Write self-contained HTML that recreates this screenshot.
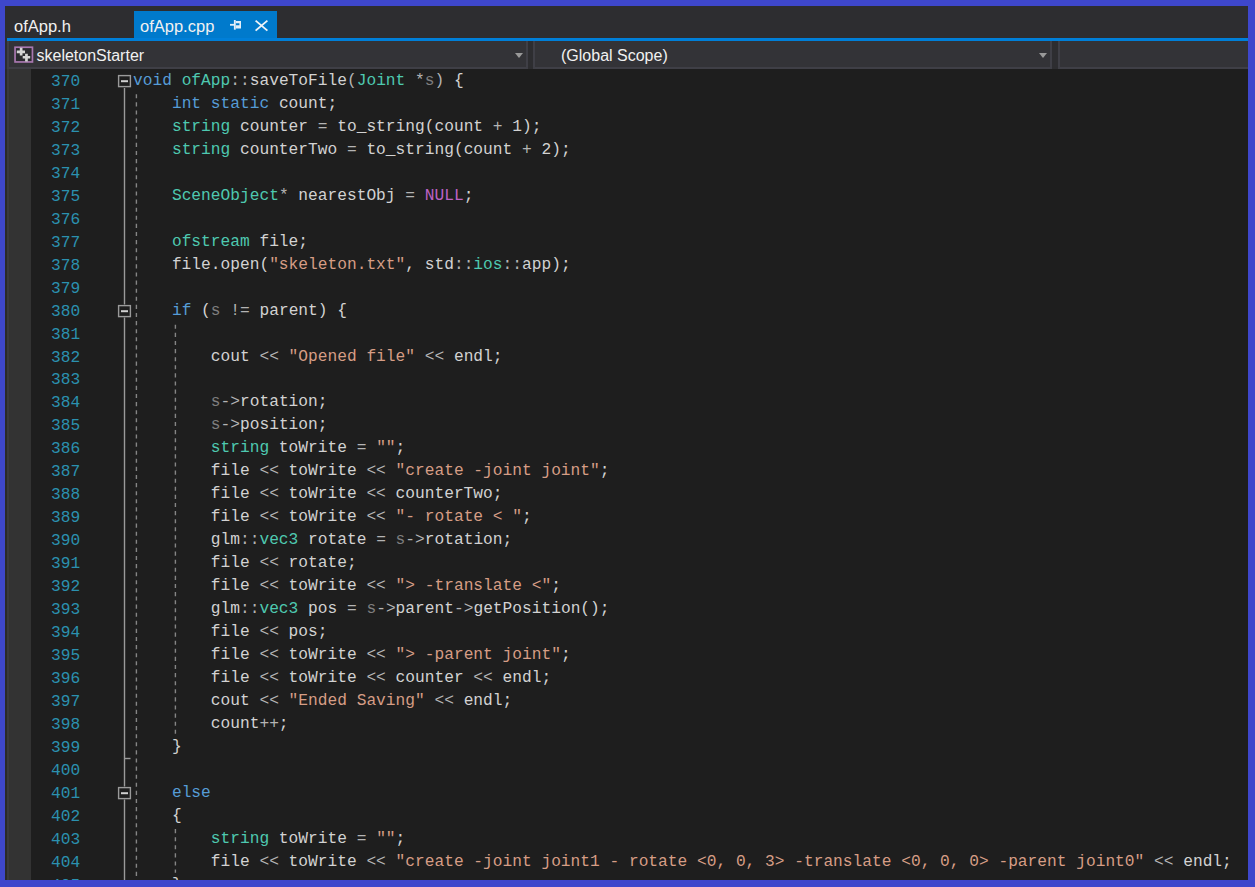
<!DOCTYPE html>
<html><head><meta charset="utf-8">
<style>
html,body{margin:0;padding:0;}
body{width:1255px;height:887px;background:#3E47CC;position:relative;overflow:hidden;font-family:"Liberation Sans",sans-serif;}
#win{position:absolute;left:5px;top:6px;width:1243px;height:874px;background:#2D2D30;overflow:hidden;}
.abs{position:absolute;}
#tabline{left:2px;top:32px;width:1241px;height:3px;background:#007FD8;}
#acttab{left:129px;top:5px;width:143px;height:29px;background:#007ACC;}
.tabtxt{position:absolute;font-size:16.5px;color:#F1F1F1;white-space:nowrap;line-height:20px;}
#ddbar{left:0;top:35px;width:1243px;height:28px;background:#2D2D30;}
.dd{position:absolute;top:0px;height:26px;background:#333337;border:2px solid #3F3F46;border-top:none;}
.ddtxt{position:absolute;font-size:16px;color:#F1F1F1;white-space:nowrap;line-height:20px;}
.arrow{position:absolute;width:0;height:0;border-left:4.5px solid transparent;border-right:4.5px solid transparent;border-top:5px solid #999999;}
#editor{left:0;top:63px;width:1243px;height:811px;background:#1E1E1E;}
#lborder{left:2px;top:63px;width:2px;height:811px;background:#3A3A3F;}
#ldark{left:0;top:63px;width:2px;height:811px;background:#2A2A2A;}
#margin{left:4px;top:63px;width:22px;height:811px;background:#333333;}
.ln{position:absolute;left:46px;width:29.25px;text-align:right;font-family:"Liberation Mono",monospace;font-size:16.22px;line-height:23px;color:#2B91AF;white-space:pre;}
.cl{position:absolute;left:128px;font-family:"Liberation Mono",monospace;font-size:16.22px;line-height:23px;color:#D2D2D2;white-space:pre;}
.k{color:#569CD6}.t{color:#4EC9B0}.s{color:#D69D85}.o{color:#B4B4B4}.p{color:#7F7F7F}.m{color:#BD63C5}
</style></head><body>
<div id="win">
  <div class="tabtxt" style="left:9px;top:10px;">ofApp.h</div>
  <div id="acttab" class="abs"></div>
  <div class="tabtxt" style="left:135px;top:10px;">ofApp.cpp</div>
  <svg class="abs" style="left:0;top:0" width="300" height="40">
    <!-- pin -->
    <g fill="#E4EEF8">
      <rect x="225" y="17.9" width="4.5" height="1.8"/>
      <rect x="228.9" y="14" width="1.8" height="9.7"/>
      <path fill-rule="evenodd" d="M230.7 15 H236 V22.6 H230.7 Z M230.9 17.2 H234.4 V19.3 H230.9 Z"/>
    </g>
    <!-- close X -->
    <g stroke="#EEF3F8" stroke-width="1.9">
      <line x1="250.6" y1="14.6" x2="262.4" y2="24.6"/>
      <line x1="262.4" y1="14.6" x2="250.6" y2="24.6"/>
    </g>
  </svg>
  <div id="tabline" class="abs"></div>
  <div id="ddbar" class="abs">
    <div class="dd" style="left:2px;width:517px;"></div>
    <div class="dd" style="left:527.7px;width:515px;"></div>
    <div class="dd" style="left:1052.5px;width:200px;"></div>
    <svg class="abs" style="left:9px;top:5px" width="20" height="18">
      <rect x="1.05" y="1.25" width="17.4" height="14.7" fill="#2A2A2E" stroke="#A877B0" stroke-width="1.7"/>
      <path d="M7.15 1.7 V9.4 M2.8 5.9 H11 M12.45 7.7 V15.4 M8.7 11.25 H16.2" stroke="#D4D4D4" stroke-width="2.7"/>
    </svg>
    <div class="ddtxt" style="left:31.5px;top:5px;">skeletonStarter</div>
    <div class="arrow" style="left:510px;top:12px;"></div>
    <div class="ddtxt" style="left:556px;top:5px;">(Global Scope)</div>
    <div class="arrow" style="left:1034px;top:12px;"></div>
  </div>
  <div id="editor" class="abs"></div>
  <div id="ldark" class="abs"></div>
  <div id="lborder" class="abs"></div>
  <div id="margin" class="abs"></div>
  <div class="abs" style="left:0;top:-6px;">
<div class="ln" style="top:71.00px">370</div><div class="cl" style="top:70.00px"><span class="k">void</span> <span class="t">ofApp</span><span class="o">::</span>saveToFile<span class="o">(</span><span class="t">Joint</span> <span class="o">*</span><span class="p">s</span><span class="o">)</span> {</div>
<div class="ln" style="top:93.96px">371</div><div class="cl" style="top:92.96px">    <span class="k">int</span> <span class="k">static</span> count;</div>
<div class="ln" style="top:116.92px">372</div><div class="cl" style="top:115.92px">    <span class="t">string</span> counter <span class="o">=</span> to_string(count <span class="o">+</span> 1);</div>
<div class="ln" style="top:139.88px">373</div><div class="cl" style="top:138.88px">    <span class="t">string</span> counterTwo <span class="o">=</span> to_string(count <span class="o">+</span> 2);</div>
<div class="ln" style="top:162.84px">374</div><div class="cl" style="top:161.84px"></div>
<div class="ln" style="top:185.80px">375</div><div class="cl" style="top:184.80px">    <span class="t">SceneObject</span><span class="o">*</span> nearestObj <span class="o">=</span> <span class="m">NULL</span>;</div>
<div class="ln" style="top:208.76px">376</div><div class="cl" style="top:207.76px"></div>
<div class="ln" style="top:231.72px">377</div><div class="cl" style="top:230.72px">    <span class="t">ofstream</span> file;</div>
<div class="ln" style="top:254.68px">378</div><div class="cl" style="top:253.68px">    file.open(<span class="s">&quot;skeleton.txt&quot;</span>, std<span class="o">::</span><span class="t">ios</span><span class="o">::</span>app);</div>
<div class="ln" style="top:277.64px">379</div><div class="cl" style="top:276.64px"></div>
<div class="ln" style="top:300.60px">380</div><div class="cl" style="top:299.60px">    <span class="k">if</span> (<span class="p">s</span> <span class="o">!=</span> parent) {</div>
<div class="ln" style="top:323.56px">381</div><div class="cl" style="top:322.56px"></div>
<div class="ln" style="top:346.52px">382</div><div class="cl" style="top:345.52px">        cout <span class="o">&lt;&lt;</span> <span class="s">&quot;Opened file&quot;</span> <span class="o">&lt;&lt;</span> endl;</div>
<div class="ln" style="top:369.48px">383</div><div class="cl" style="top:368.48px"></div>
<div class="ln" style="top:392.44px">384</div><div class="cl" style="top:391.44px">        <span class="p">s</span><span class="o">-&gt;</span>rotation;</div>
<div class="ln" style="top:415.40px">385</div><div class="cl" style="top:414.40px">        <span class="p">s</span><span class="o">-&gt;</span>position;</div>
<div class="ln" style="top:438.36px">386</div><div class="cl" style="top:437.36px">        <span class="t">string</span> toWrite <span class="o">=</span> <span class="s">&quot;&quot;</span>;</div>
<div class="ln" style="top:461.32px">387</div><div class="cl" style="top:460.32px">        file <span class="o">&lt;&lt;</span> toWrite <span class="o">&lt;&lt;</span> <span class="s">&quot;create -joint joint&quot;</span>;</div>
<div class="ln" style="top:484.28px">388</div><div class="cl" style="top:483.28px">        file <span class="o">&lt;&lt;</span> toWrite <span class="o">&lt;&lt;</span> counterTwo;</div>
<div class="ln" style="top:507.24px">389</div><div class="cl" style="top:506.24px">        file <span class="o">&lt;&lt;</span> toWrite <span class="o">&lt;&lt;</span> <span class="s">&quot;- rotate &lt; &quot;</span>;</div>
<div class="ln" style="top:530.20px">390</div><div class="cl" style="top:529.20px">        glm<span class="o">::</span><span class="t">vec3</span> rotate <span class="o">=</span> <span class="p">s</span><span class="o">-&gt;</span>rotation;</div>
<div class="ln" style="top:553.16px">391</div><div class="cl" style="top:552.16px">        file <span class="o">&lt;&lt;</span> rotate;</div>
<div class="ln" style="top:576.12px">392</div><div class="cl" style="top:575.12px">        file <span class="o">&lt;&lt;</span> toWrite <span class="o">&lt;&lt;</span> <span class="s">&quot;&gt; -translate &lt;&quot;</span>;</div>
<div class="ln" style="top:599.08px">393</div><div class="cl" style="top:598.08px">        glm<span class="o">::</span><span class="t">vec3</span> pos <span class="o">=</span> <span class="p">s</span><span class="o">-&gt;</span>parent<span class="o">-&gt;</span>getPosition();</div>
<div class="ln" style="top:622.04px">394</div><div class="cl" style="top:621.04px">        file <span class="o">&lt;&lt;</span> pos;</div>
<div class="ln" style="top:645.00px">395</div><div class="cl" style="top:644.00px">        file <span class="o">&lt;&lt;</span> toWrite <span class="o">&lt;&lt;</span> <span class="s">&quot;&gt; -parent joint&quot;</span>;</div>
<div class="ln" style="top:667.96px">396</div><div class="cl" style="top:666.96px">        file <span class="o">&lt;&lt;</span> toWrite <span class="o">&lt;&lt;</span> counter <span class="o">&lt;&lt;</span> endl;</div>
<div class="ln" style="top:690.92px">397</div><div class="cl" style="top:689.92px">        cout <span class="o">&lt;&lt;</span> <span class="s">&quot;Ended Saving&quot;</span> <span class="o">&lt;&lt;</span> endl;</div>
<div class="ln" style="top:713.88px">398</div><div class="cl" style="top:712.88px">        count<span class="o">++</span>;</div>
<div class="ln" style="top:736.84px">399</div><div class="cl" style="top:735.84px">    }</div>
<div class="ln" style="top:759.80px">400</div><div class="cl" style="top:758.80px"></div>
<div class="ln" style="top:782.76px">401</div><div class="cl" style="top:781.76px">    <span class="k">else</span></div>
<div class="ln" style="top:805.72px">402</div><div class="cl" style="top:804.72px">    {</div>
<div class="ln" style="top:828.68px">403</div><div class="cl" style="top:827.68px">        <span class="t">string</span> toWrite <span class="o">=</span> <span class="s">&quot;&quot;</span>;</div>
<div class="ln" style="top:851.64px">404</div><div class="cl" style="top:850.64px">        file <span class="o">&lt;&lt;</span> toWrite <span class="o">&lt;&lt;</span> <span class="s">&quot;create -joint joint1 - rotate &lt;0, 0, 3&gt; -translate &lt;0, 0, 0&gt; -parent joint0&quot;</span> <span class="o">&lt;&lt;</span> endl;</div>
<div class="ln" style="top:874.60px">405</div><div class="cl" style="top:873.60px">    }</div>
  </div>
  <svg class="abs" style="left:-5px;top:-6px" width="300" height="887">
    <g stroke="#9A9A9A" stroke-width="1.4" fill="none">
      <line x1="124.5" y1="88" x2="124.5" y2="304.5"/>
      <line x1="124.5" y1="317.5" x2="124.5" y2="786.5"/>
      <line x1="124.5" y1="799.5" x2="124.5" y2="880"/>
      <line x1="124.5" y1="758.5" x2="130.5" y2="758.5"/>
      <rect x="118.6" y="75.6" width="11.8" height="11" />
      <rect x="118.6" y="305.6" width="11.8" height="11" />
      <rect x="118.6" y="787.6" width="11.8" height="11" />
    </g>
    <g stroke="#D0D0D0" stroke-width="2">
      <line x1="121" y1="81.2" x2="128" y2="81.2"/>
      <line x1="121" y1="311.2" x2="128" y2="311.2"/>
      <line x1="121" y1="793.2" x2="128" y2="793.2"/>
    </g>
    <g stroke="#858585" stroke-width="1.4" stroke-dasharray="4.1 4">
      <line x1="136.4" y1="94.25" x2="136.4" y2="880"/>
      <line x1="175.4" y1="324.75" x2="175.4" y2="734.2"/>
      <line x1="175.4" y1="829.05" x2="175.4" y2="872.7"/>
    </g>
  </svg>
</div>
</body></html>
